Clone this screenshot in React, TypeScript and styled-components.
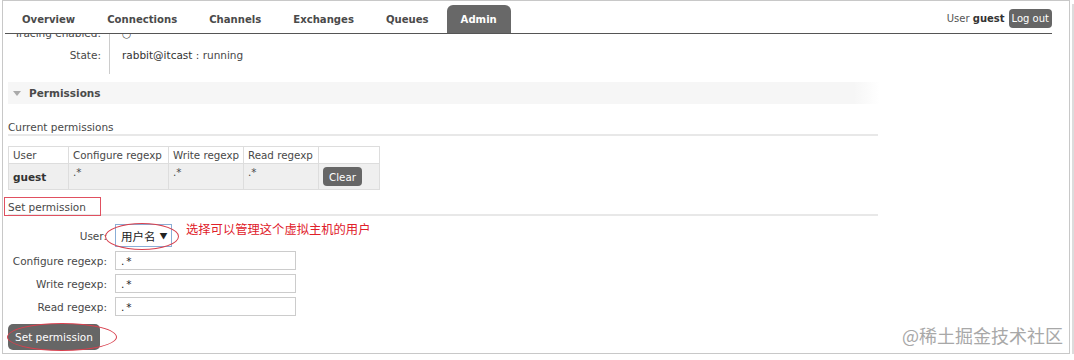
import React from 'react';
import styled, { createGlobalStyle } from 'styled-components';

const GlobalStyle = createGlobalStyle`
  body {
    margin: 0;
    background: #fff;
    font-family: "DejaVu Sans", Verdana, sans-serif;
    font-size: 10.5px;
    color: #484848;
  }
`;

const Frame = styled.div`
  position: relative;
  margin-left: 2px;
  width: 1066px;
  height: 352px;
  border: 1px solid #c8c8c8;
  box-shadow: 2px 2px 0 #fff, 4px 4px 0 #dcdcdc;
  overflow: hidden;
  background: #fff;
`;

const Header = styled.div`
  position: relative;
  z-index: 2;
  display: flex;
  justify-content: space-between;
  height: 32px;
  margin: 0 17px 0 2px;
  padding-left: 3px;
  border-bottom: 1px solid #555;
  background: #fff;
`;

const Tabs = styled.ul`
  display: flex;
  align-items: flex-end;
  gap: 4px;
  margin: 0;
  padding: 0;
  list-style: none;
`;

const Tab = styled.li<{ $active?: boolean }>`
  height: 28px;
  padding: 0 14px;
  display: flex;
  align-items: center;
  font-size: 10.1px;
  font-weight: bold;
  color: ${(p) => (p.$active ? '#fff' : '#4a4a4a')};
  background: ${(p) => (p.$active ? '#686868' : 'transparent')};
  border-radius: 6px 6px 0 0;
`;

const UserBox = styled.div`
  display: flex;
  align-items: center;
  gap: 4px;
  margin-top: 8px;
  height: 19px;
  font-size: 10px;
  color: #555;
  b {
    color: #333;
  }
`;

const SmallButton = styled.span<{ $pad?: number }>`
  display: inline-flex;
  align-items: center;
  height: 19px;
  padding: 0 ${(p) => p.$pad ?? 3}px;
  border-radius: 4px;
  background: #666;
  color: #fff;
`;

const Main = styled.div`
  position: relative;
  padding-left: 5px;
  display: flex;
  flex-direction: column;
  align-items: flex-start;
`;

const InfoTable = styled.div`
  display: grid;
  grid-template-columns: 102px auto;
  margin-top: -12px;
`;

const InfoLabel = styled.div<{ $last?: boolean }>`
  line-height: 22px;
  text-align: right;
  padding-right: 8px;
  padding-bottom: ${(p) => (p.$last ? '8px' : '0')};
  border-right: 1px solid #ccc;
  color: #484848;
`;

const InfoValue = styled.div`
  line-height: 22px;
  padding-left: 12px;
  .node {
    color: #333;
  }
`;

const SectionBar = styled.div`
  margin-top: 8px;
  width: 872px;
  height: 22px;
  display: flex;
  align-items: center;
  gap: 8px;
  padding-left: 5px;
  box-sizing: border-box;
  background: linear-gradient(to right, #f6f6f6 97%, #fff);
  font-weight: bold;
  color: #4a4a4a;
`;

const Caret = styled.span`
  width: 0;
  height: 0;
  border-left: 4px solid transparent;
  border-right: 4px solid transparent;
  border-top: 5px solid #aaa;
`;

const SubHeading = styled.h3<{ $top: number }>`
  margin: ${(p) => p.$top}px 0 0;
  width: 870px;
  line-height: 13px;
  font-size: 10.5px;
  font-weight: normal;
  color: #484848;
  border-bottom: 2px solid #e8e8e8;
`;

const Marked = styled.span`
  position: relative;
  &::after {
    content: '';
    position: absolute;
    left: -4px;
    top: -4px;
    width: 97px;
    height: 19px;
    border: 1px solid #e05060;
    box-sizing: border-box;
  }
`;

const PermTable = styled.table`
  margin-top: 10px;
  border-collapse: collapse;
  white-space: nowrap;
  font-size: 10.3px;
  th,
  td {
    border: 1px solid #ddd;
    padding: 0 3px 0 4px;
    text-align: left;
    font-weight: normal;
    color: #484848;
  }
  th {
    height: 16px;
    background: #fff;
  }
  td {
    height: 23px;
    background: #efefef;
  }
  td.user {
    font-weight: bold;
    font-size: 10.5px;
    color: #333;
  }
  td.regexp {
    vertical-align: top;
    padding-top: 2px;
  }
`;

const FormGrid = styled.div`
  margin-top: 8px;
  display: grid;
  grid-template-columns: 99px auto;
  column-gap: 8px;
  row-gap: 4px;
  align-items: center;
`;

const FormLabel = styled.label`
  text-align: right;
  white-space: nowrap;
  color: #484848;
`;

const SelectRow = styled.div`
  display: flex;
  align-items: center;
  height: 23px;
`;

const Select = styled.div`
  position: relative;
  width: 57px;
  height: 23px;
  box-sizing: border-box;
  border: 1px solid #8aaed6;
  display: flex;
  align-items: center;
  padding-left: 5px;
  gap: 4px;
  font-family: "Noto Sans CJK SC", sans-serif;
  font-size: 11.5px;
  color: #222;
  .arrow {
    font-size: 8px;
  }
`;

const Ellipse = styled.span<{ $l: number; $t: number; $w: number; $h: number }>`
  position: absolute;
  left: ${(p) => p.$l}px;
  top: ${(p) => p.$t}px;
  width: ${(p) => p.$w}px;
  height: ${(p) => p.$h}px;
  border: 1.5px solid #d8404e;
  border-radius: 50%;
  box-sizing: border-box;
  pointer-events: none;
`;

const Note = styled.span`
  margin: -13px 0 0 14px;
  font-family: "Noto Sans CJK SC", serif;
  font-size: 12.3px;
  color: #e0202a;
`;

const Input = styled.div`
  width: 181px;
  height: 19px;
  box-sizing: border-box;
  border: 1px solid #ccc;
  display: flex;
  align-items: center;
  padding-left: 5px;
  letter-spacing: 2px;
  color: #222;
`;

const ButtonWrap = styled.div`
  position: relative;
  margin-top: 8px;
`;

const BigButton = styled.div`
  width: 92px;
  height: 26px;
  border-radius: 5px;
  background: #666;
  color: #fff;
  display: flex;
  align-items: center;
  justify-content: center;
`;

const Watermark = styled.div`
  position: absolute;
  right: 6px;
  bottom: 5px;
  font-family: "Noto Sans CJK SC", sans-serif;
  font-size: 18px;
  color: #a8a8a8;
`;

const tabs = ['Overview', 'Connections', 'Channels', 'Exchanges', 'Queues', 'Admin'];
const regexps = ['Configure regexp:', 'Write regexp:', 'Read regexp:'];

export default function App() {
  return (
    <>
      <GlobalStyle />
      <Frame>
        <Header>
          <Tabs>
            {tabs.map((t) => (
              <Tab key={t} $active={t === 'Admin'}>
                {t}
              </Tab>
            ))}
          </Tabs>
          <UserBox>
            <span>
              User <b>guest</b>
            </span>
            <SmallButton>Log out</SmallButton>
          </UserBox>
        </Header>
        <Main>
          <InfoTable>
            <InfoLabel>Tracing enabled:</InfoLabel>
            <InfoValue>○</InfoValue>
            <InfoLabel $last>State:</InfoLabel>
            <InfoValue>
              <span className="node">rabbit@itcast</span>&nbsp;: running
            </InfoValue>
          </InfoTable>

          <SectionBar>
            <Caret />
            Permissions
          </SectionBar>

          <SubHeading $top={17}>Current permissions</SubHeading>
          <PermTable>
            <thead>
              <tr>
                <th style={{ width: 52 }}>User</th>
                <th style={{ width: 92 }}>Configure regexp</th>
                <th style={{ width: 67 }}>Write regexp</th>
                <th style={{ width: 67 }}>Read regexp</th>
                <th style={{ width: 53 }}></th>
              </tr>
            </thead>
            <tbody>
              <tr>
                <td className="user">guest</td>
                <td className="regexp">.*</td>
                <td className="regexp">.*</td>
                <td className="regexp">.*</td>
                <td>
                  <SmallButton $pad={6}>Clear</SmallButton>
                </td>
              </tr>
            </tbody>
          </PermTable>

          <SubHeading $top={11}>
            <Marked>Set permission</Marked>
          </SubHeading>
          <FormGrid>
            <FormLabel>User:</FormLabel>
            <SelectRow>
              <Select>
                用户名 <span className="arrow">▼</span>
                <Ellipse $l={-11} $t={-2} $w={74} $h={27} />
              </Select>
              <Note>选择可以管理这个虚拟主机的用户</Note>
            </SelectRow>
            {regexps.map((r) => (
              <React.Fragment key={r}>
                <FormLabel>{r}</FormLabel>
                <Input>.*</Input>
              </React.Fragment>
            ))}
          </FormGrid>
          <ButtonWrap>
            <BigButton>Set permission</BigButton>
            <Ellipse $l={-1} $t={-1} $w={110} $h={28} />
          </ButtonWrap>
        </Main>
        <Watermark>@稀土掘金技术社区</Watermark>
      </Frame>
    </>
  );
}
